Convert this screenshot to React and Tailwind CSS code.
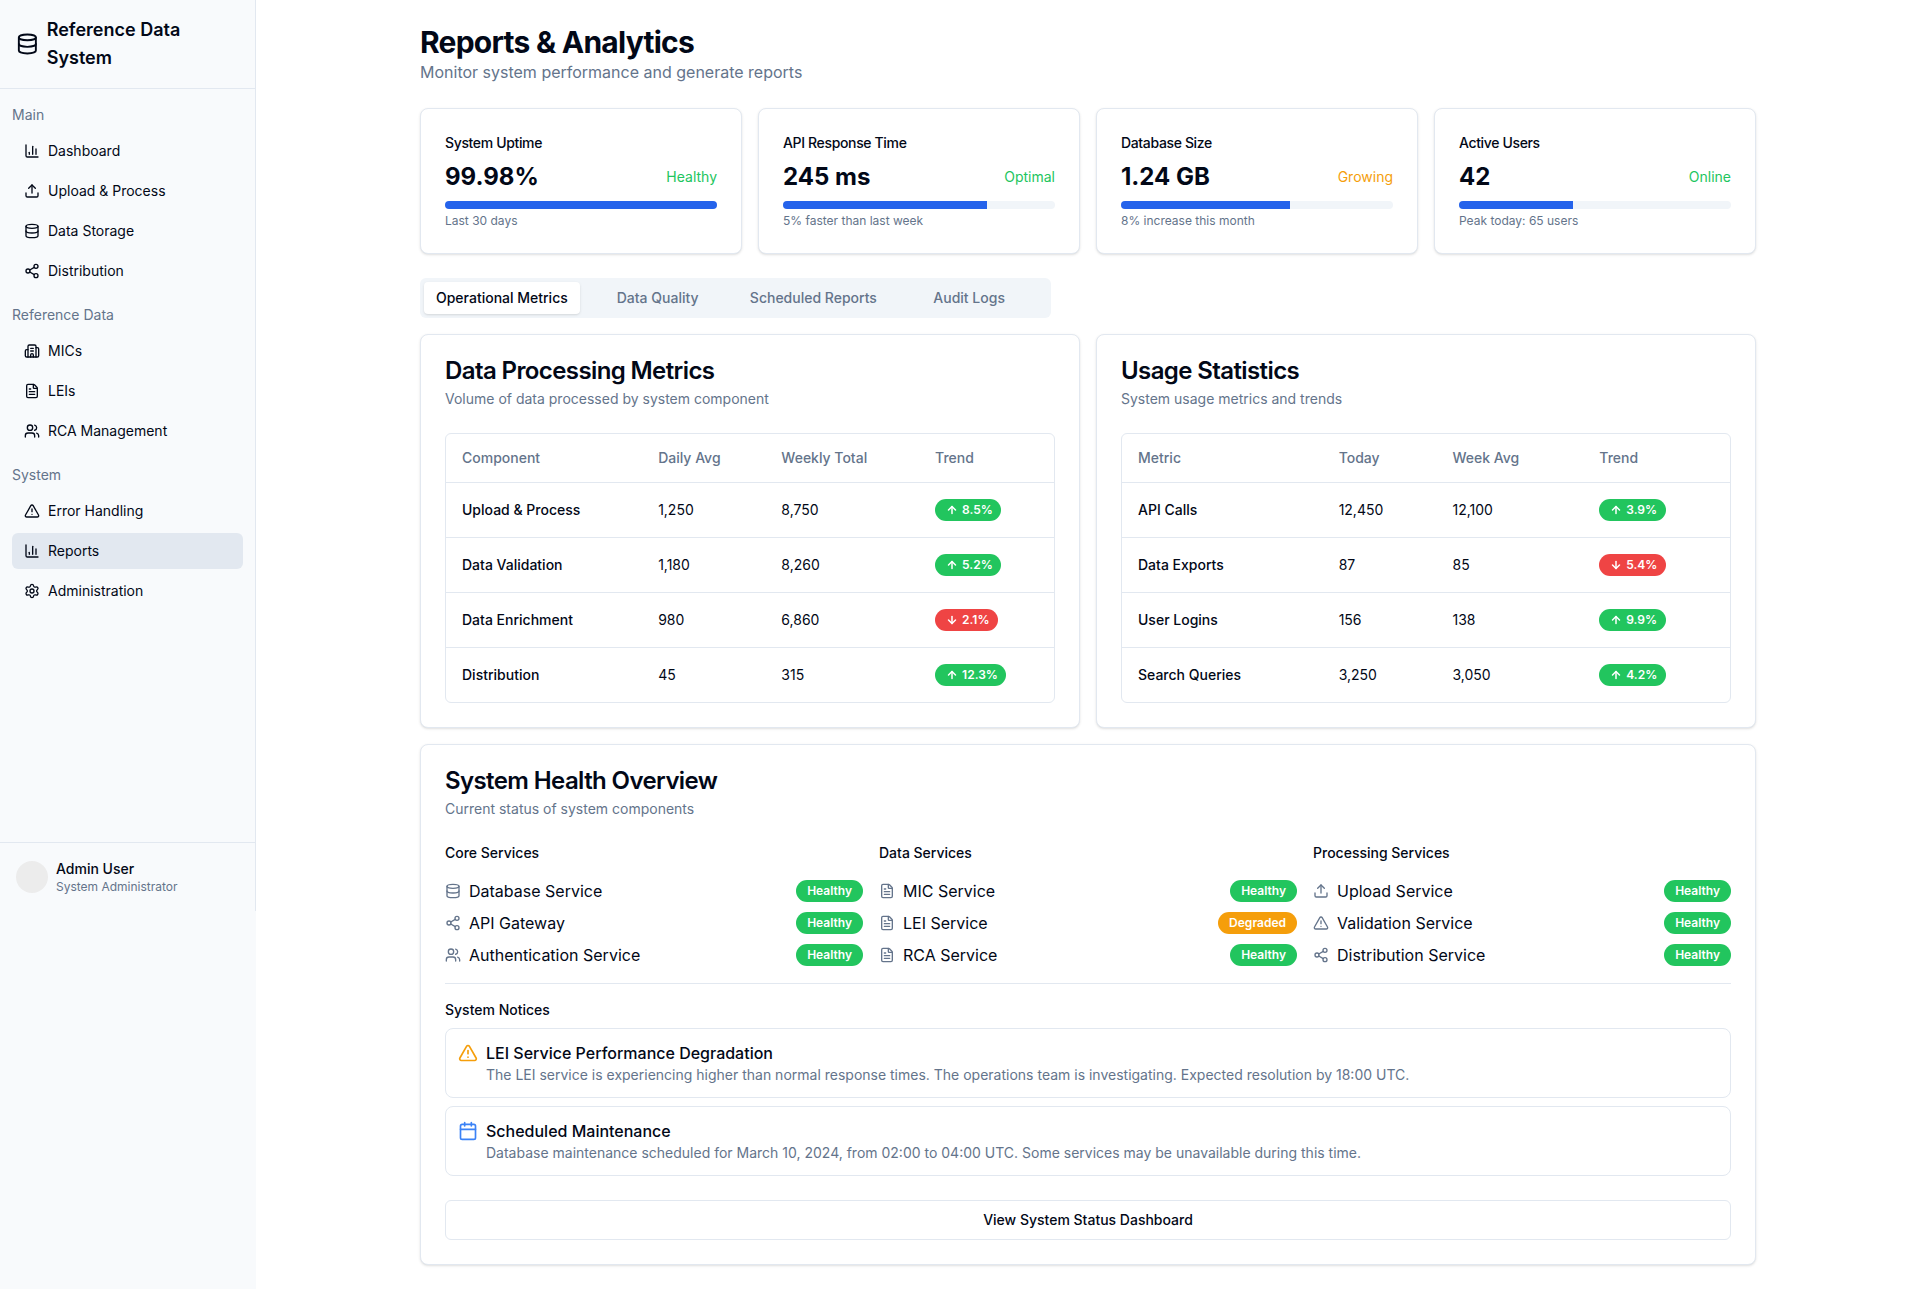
import {
  AlertTriangle, ArrowDown, ArrowUp, BarChart3, Building2, Calendar, Database,
  FileText, Settings, Share2, Upload, Users,
} from 'lucide-react';

const nav = [
  { label: 'Main', items: [
    { name: 'Dashboard', icon: BarChart3 },
    { name: 'Upload & Process', icon: Upload },
    { name: 'Data Storage', icon: Database },
    { name: 'Distribution', icon: Share2 },
  ] },
  { label: 'Reference Data', items: [
    { name: 'MICs', icon: Building2 },
    { name: 'LEIs', icon: FileText },
    { name: 'RCA Management', icon: Users },
  ] },
  { label: 'System', items: [
    { name: 'Error Handling', icon: AlertTriangle },
    { name: 'Reports', icon: BarChart3, active: true },
    { name: 'Administration', icon: Settings },
  ] },
];

const stats = [
  { title: 'System Uptime', value: '99.98%', status: 'Healthy', statusClass: 'text-[#22c55e]', pct: 100, note: 'Last 30 days' },
  { title: 'API Response Time', value: '245 ms', status: 'Optimal', statusClass: 'text-[#22c55e]', pct: 75, note: '5% faster than last week' },
  { title: 'Database Size', value: '1.24 GB', status: 'Growing', statusClass: 'text-[#f59e0b]', pct: 62, note: '8% increase this month' },
  { title: 'Active Users', value: '42', status: 'Online', statusClass: 'text-[#22c55e]', pct: 42, note: 'Peak today: 65 users' },
];

const processing = [
  ['Upload & Process', '1,250', '8,750', '8.5', true],
  ['Data Validation', '1,180', '8,260', '5.2', true],
  ['Data Enrichment', '980', '6,860', '2.1', false],
  ['Distribution', '45', '315', '12.3', true],
];

const usage = [
  ['API Calls', '12,450', '12,100', '3.9', true],
  ['Data Exports', '87', '85', '5.4', false],
  ['User Logins', '156', '138', '9.9', true],
  ['Search Queries', '3,250', '3,050', '4.2', true],
];

const services = [
  { title: 'Core Services', rows: [
    { name: 'Database Service', icon: Database },
    { name: 'API Gateway', icon: Share2 },
    { name: 'Authentication Service', icon: Users },
  ] },
  { title: 'Data Services', rows: [
    { name: 'MIC Service', icon: FileText },
    { name: 'LEI Service', icon: FileText, degraded: true },
    { name: 'RCA Service', icon: FileText },
  ] },
  { title: 'Processing Services', rows: [
    { name: 'Upload Service', icon: Upload },
    { name: 'Validation Service', icon: AlertTriangle },
    { name: 'Distribution Service', icon: Share2 },
  ] },
];

function Sidebar() {
  return (
    <aside className="w-64 shrink-0 bg-slate-50">
      <div className="h-[911px] flex flex-col border-r border-slate-200">
        <div className="flex items-center gap-2 p-4 border-b border-slate-200">
          <Database className="w-6 h-6" />
          <h1 className="text-lg font-semibold">Reference Data System</h1>
        </div>
        <nav className="flex-1 px-3 py-4 space-y-4">
          {nav.map(group => (
            <div key={group.label}>
              <div className="text-sm text-[#64748b] mb-2">{group.label}</div>
              <div className="space-y-1">
                {group.items.map(item => (
                  <div key={item.name} className={`h-9 flex items-center gap-2 px-3 rounded-md text-sm ${item.active ? 'bg-slate-200' : ''}`}>
                    <item.icon className="w-4 h-4 shrink-0" />
                    <span>{item.name}</span>
                  </div>
                ))}
              </div>
            </div>
          ))}
        </nav>
        <div className="flex items-center gap-2 p-4 border-t border-slate-200">
          <div className="w-8 h-8 rounded-full bg-[#ececec]" />
          <div>
            <div className="text-sm font-medium">Admin User</div>
            <div className="text-xs text-[#64748b]">System Administrator</div>
          </div>
        </div>
      </div>
    </aside>
  );
}

function StatCard({ stat }) {
  return (
    <div className="bg-white border border-slate-200 rounded-lg shadow-sm p-6">
      <div className="text-sm font-medium tracking-tight">{stat.title}</div>
      <div className="flex items-center justify-between mt-2">
        <div className="text-2xl font-bold">{stat.value}</div>
        <div className={`text-sm ${stat.statusClass}`}>{stat.status}</div>
      </div>
      <div className="h-2 mt-2 rounded-full bg-slate-100 overflow-hidden">
        <div className="h-full bg-[#2563eb]" style={{ width: `${stat.pct}%` }} />
      </div>
      <div className="text-xs text-[#64748b] mt-1">{stat.note}</div>
    </div>
  );
}

function Trend({ value, up }) {
  const Icon = up ? ArrowUp : ArrowDown;
  return (
    <span className={`inline-flex items-center rounded-full border border-transparent px-2.5 py-0.5 text-xs font-semibold text-white ${up ? 'bg-[#22c55e]' : 'bg-[#ef4444]'}`}>
      <Icon className="w-3 h-3 mr-1" strokeWidth={3} />
      {value}
      <span className="tracking-[-0.2em]">%</span>
    </span>
  );
}

function MetricsCard({ title, desc, head, rows }) {
  return (
    <div className="bg-white border border-slate-200 rounded-lg shadow-sm p-6">
      <h2 className="text-2xl font-semibold leading-none tracking-tight">{title}</h2>
      <p className="text-sm text-[#64748b] mt-1.5">{desc}</p>
      <div className="mt-6 border border-slate-200 rounded-md">
        <table className="w-full text-sm">
          <thead>
            <tr className="border-b border-slate-200">
              {head.map(h => (
                <th key={h} className="h-12 px-4 text-left font-medium text-[#64748b]">{h}</th>
              ))}
            </tr>
          </thead>
          <tbody>
            {rows.map(r => (
              <tr key={r[0]} className="border-b border-slate-200 last:border-0">
                <td className="p-4 font-medium">{r[0]}</td>
                <td className="p-4">{r[1]}</td>
                <td className="p-4">{r[2]}</td>
                <td className="p-4"><Trend value={r[3]} up={r[4]} /></td>
              </tr>
            ))}
          </tbody>
        </table>
      </div>
    </div>
  );
}

function HealthBadge({ degraded }) {
  return (
    <span className={`inline-flex items-center rounded-full border border-transparent px-2.5 py-0.5 text-xs font-semibold text-white ${degraded ? 'bg-[#f59e0b]' : 'bg-[#22c55e]'}`}>
      {degraded ? 'Degraded' : 'Healthy'}
    </span>
  );
}

function Notice({ icon: Icon, iconClass, title, children }) {
  return (
    <div className="flex gap-2 border border-slate-200 rounded-lg px-3 py-3">
      <Icon className={`w-5 h-5 shrink-0 mt-0.5 ${iconClass}`} />
      <div>
        <div className="font-medium">{title}</div>
        <div className="text-sm text-[#64748b]">{children}</div>
      </div>
    </div>
  );
}

export default function App() {
  return (
    <div className="flex min-h-screen bg-white text-[#020817] font-['Inter',sans-serif]">
      <Sidebar />
      <main className="flex-1 min-w-0">
        <div className="max-w-[1400px] mx-auto px-8 py-6">
          <h1 className="text-3xl font-bold tracking-tight">Reports & Analytics</h1>
          <p className="text-[#64748b]">Monitor system performance and generate reports</p>

          <div className="grid grid-cols-4 gap-4 mt-6">
            {stats.map(s => <StatCard key={s.title} stat={s} />)}
          </div>

          <div className="w-[631px] h-10 grid grid-cols-4 p-1 mt-6 rounded-md bg-slate-100 text-sm font-medium text-[#64748b]">
            <div className="flex items-center justify-center rounded-sm bg-white shadow-sm text-[#020817]">Operational Metrics</div>
            <div className="flex items-center justify-center">Data Quality</div>
            <div className="flex items-center justify-center">Scheduled Reports</div>
            <div className="flex items-center justify-center">Audit Logs</div>
          </div>

          <div className="grid grid-cols-2 gap-4 mt-4">
            <MetricsCard
              title="Data Processing Metrics"
              desc="Volume of data processed by system component"
              head={['Component', 'Daily Avg', 'Weekly Total', 'Trend']}
              rows={processing}
            />
            <MetricsCard
              title="Usage Statistics"
              desc="System usage metrics and trends"
              head={['Metric', 'Today', 'Week Avg', 'Trend']}
              rows={usage}
            />
          </div>

          <div className="bg-white border border-slate-200 rounded-lg shadow-sm p-6 mt-4">
            <h2 className="text-2xl font-semibold leading-none tracking-tight">System Health Overview</h2>
            <p className="text-sm text-[#64748b] mt-1.5">Current status of system components</p>

            <div className="grid grid-cols-3 gap-4 mt-6">
              {services.map(col => (
                <div key={col.title}>
                  <h3 className="text-sm font-medium mb-4">{col.title}</h3>
                  <div className="space-y-2">
                    {col.rows.map(row => (
                      <div key={row.name} className="flex items-center justify-between">
                        <div className="flex items-center">
                          <row.icon className="w-4 h-4 mr-2 text-[#64748b]" />
                          <span>{row.name}</span>
                        </div>
                        <HealthBadge degraded={row.degraded} />
                      </div>
                    ))}
                  </div>
                </div>
              ))}
            </div>

            <div className="border-t border-slate-200 mt-4 pt-4">
              <h3 className="text-sm font-medium mb-2">System Notices</h3>
              <div className="space-y-2">
                <Notice icon={AlertTriangle} iconClass="text-[#f59e0b]" title="LEI Service Performance Degradation">
                  The LEI service is experiencing higher than normal response times. The operations team is investigating. Expected resolution by 18:00 UTC.
                </Notice>
                <Notice icon={Calendar} iconClass="text-[#3b82f6]" title="Scheduled Maintenance">
                  Database maintenance scheduled for March 10, 2024, from 02:00 to 04:00 UTC. Some services may be unavailable during this time.
                </Notice>
              </div>
            </div>

            <button className="w-full h-10 mt-6 border border-slate-200 rounded-md bg-white text-sm font-medium">
              View System Status Dashboard
            </button>
          </div>
        </div>
      </main>
    </div>
  );
}
